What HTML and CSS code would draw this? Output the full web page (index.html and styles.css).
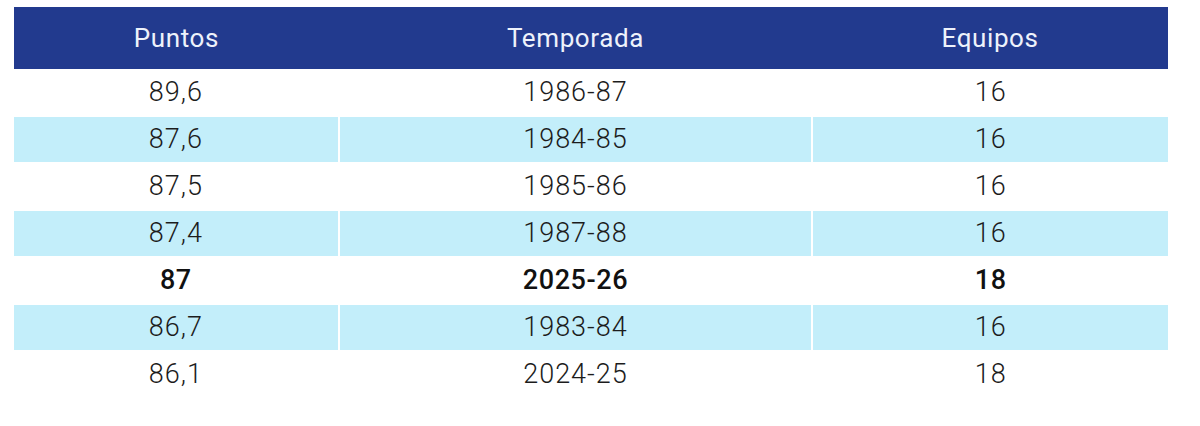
FILE: index.html
```html
<!DOCTYPE html>
<html lang="es">
<head>
    <meta charset="UTF-8">
    <meta name="viewport" content="width=device-width, initial-scale=1.0">
    <title>Puntos por temporada</title>
    <link rel="stylesheet" href="styles.css">
</head>
<body>
<div class="stats">
    <div class="head">
        <div>Puntos</div>
        <div>Temporada</div>
        <div>Equipos</div>
    </div>
    <div class="rows">
        <div class="row"><div>89,6</div><div>1986-87</div><div>16</div></div>
        <div class="row alt"><div>87,6</div><div>1984-85</div><div>16</div></div>
        <div class="row"><div>87,5</div><div>1985-86</div><div>16</div></div>
        <div class="row alt"><div>87,4</div><div>1987-88</div><div>16</div></div>
        <div class="row current"><div>87</div><div>2025-26</div><div>18</div></div>
        <div class="row alt"><div>86,7</div><div>1983-84</div><div>16</div></div>
        <div class="row"><div>86,1</div><div>2024-25</div><div>18</div></div>
    </div>
</div>
</body>
</html>
```

FILE: styles.css
```css
body {
    margin: 0;
    background-color: #fff;
    font-family: Roboto, "Liberation Sans", sans-serif;
}

.stats {
    width: 1154px;
    margin: 7px 0 0 14px;
}

.head,
.row {
    display: grid;
    grid-template-columns: 324fr 472fr 355fr;
    text-align: center;
}

.head {
    background-color: #223a8e;
    color: #eef2fb;
    height: 62px;
    line-height: 62px;
    font-size: 26px;
    letter-spacing: 0.6px;
}

.rows {
    display: flex;
    flex-direction: column;
    gap: 2px;
    padding-top: 1px;
}

.row {
    column-gap: 2px;
    font-size: 27px;
    font-weight: 300;
    letter-spacing: 1px;
    color: #1c1c1c;
}

.row div {
    height: 45px;
    line-height: 45px;
}

.row.alt div {
    background-color: #c3eefa;
}

.row.current {
    font-weight: 500;
    letter-spacing: 0.6px;
    color: #111;
}
```
